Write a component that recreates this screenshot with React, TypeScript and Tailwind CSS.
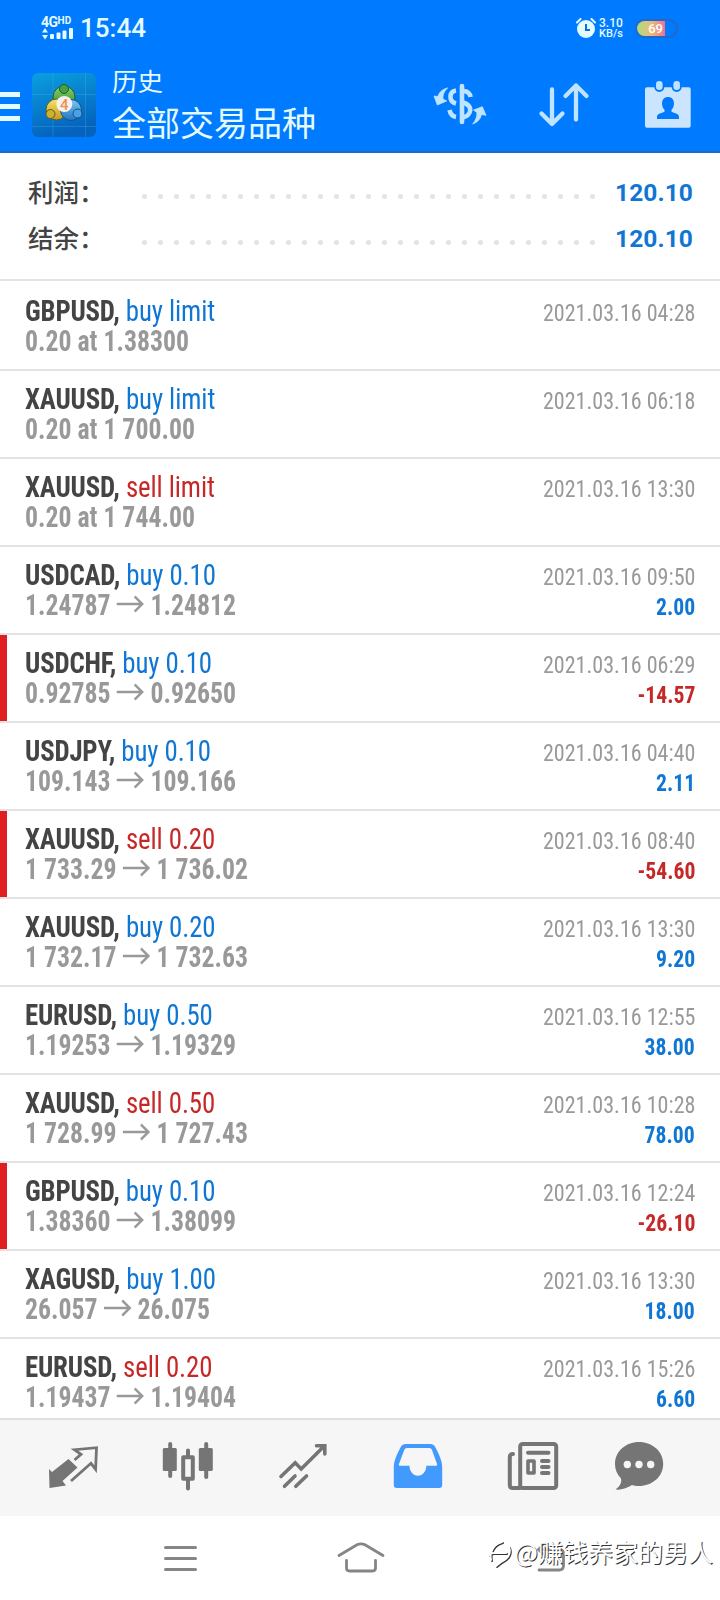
import type { ReactNode } from 'react';
import clsx from 'clsx';

type Deal = {
  symbol: string;
  side: 'buy' | 'sell';
  detail: string;
  from: string;
  to?: string;
  time: string;
  profit?: string;
};

const deals: Deal[] = [
  { symbol: 'GBPUSD', side: 'buy', detail: 'limit', from: '0.20 at 1.38300', time: '2021.03.16 04:28' },
  { symbol: 'XAUUSD', side: 'buy', detail: 'limit', from: '0.20 at 1 700.00', time: '2021.03.16 06:18' },
  { symbol: 'XAUUSD', side: 'sell', detail: 'limit', from: '0.20 at 1 744.00', time: '2021.03.16 13:30' },
  { symbol: 'USDCAD', side: 'buy', detail: '0.10', from: '1.24787', to: '1.24812', time: '2021.03.16 09:50', profit: '2.00' },
  { symbol: 'USDCHF', side: 'buy', detail: '0.10', from: '0.92785', to: '0.92650', time: '2021.03.16 06:29', profit: '-14.57' },
  { symbol: 'USDJPY', side: 'buy', detail: '0.10', from: '109.143', to: '109.166', time: '2021.03.16 04:40', profit: '2.11' },
  { symbol: 'XAUUSD', side: 'sell', detail: '0.20', from: '1 733.29', to: '1 736.02', time: '2021.03.16 08:40', profit: '-54.60' },
  { symbol: 'XAUUSD', side: 'buy', detail: '0.20', from: '1 732.17', to: '1 732.63', time: '2021.03.16 13:30', profit: '9.20' },
  { symbol: 'EURUSD', side: 'buy', detail: '0.50', from: '1.19253', to: '1.19329', time: '2021.03.16 12:55', profit: '38.00' },
  { symbol: 'XAUUSD', side: 'sell', detail: '0.50', from: '1 728.99', to: '1 727.43', time: '2021.03.16 10:28', profit: '78.00' },
  { symbol: 'GBPUSD', side: 'buy', detail: '0.10', from: '1.38360', to: '1.38099', time: '2021.03.16 12:24', profit: '-26.10' },
  { symbol: 'XAGUSD', side: 'buy', detail: '1.00', from: '26.057', to: '26.075', time: '2021.03.16 13:30', profit: '18.00' },
  { symbol: 'EURUSD', side: 'sell', detail: '0.20', from: '1.19437', to: '1.19404', time: '2021.03.16 15:26', profit: '6.60' },
];

function StatusBar() {
  return (
    <div className="flex h-14 items-center pl-[41px] pr-[42px] text-[#e3fbff]">
      <div className="flex w-8 flex-col">
        <div className="flex items-start font-['Roboto'] font-bold leading-[11px]">
          <span className="text-[14px] tracking-[-0.5px]">4G</span>
          <span className="text-[10px] leading-[8px]">HD</span>
        </div>
        <svg width="32" height="12" viewBox="0 0 32 12" fill="currentColor">
          <path d="M4 0l3 4.5H1zM4 11.5l3-4.5H1z" />
          <rect x="9" y="6" width="4" height="5" rx="1" />
          <rect x="15.500" y="4.500" width="4" height="6.500" rx="1" />
          <rect x="21.500" y="2.500" width="4" height="8.500" rx="1" />
          <rect x="28" y="0" width="4" height="11" rx="1" />
        </svg>
      </div>
      <span className="ml-[7px] font-['Roboto'] text-[26px] font-medium leading-none">15:44</span>
      <div className="ml-auto flex items-center">
        <svg width="20" height="20" viewBox="0 0 20 20" fill="none">
          <circle cx="10" cy="11" r="9" fill="#e3fbff" />
          <path d="M1 4.500L4.500 1M19 4.500L15.500 1" stroke="#e3fbff" strokeWidth="2" strokeLinecap="round" />
          <path d="M10 6v6h4" stroke="#0a6fe0" strokeWidth="2" />
        </svg>
        <div className="ml-[3px] w-[25px] font-['Roboto'] font-medium">
          <div className="text-[12px] leading-[11px]">3.10</div>
          <div className="text-[11px] leading-[10px]">KB/s</div>
        </div>
        <div className="ml-[11px] flex h-[19px] w-[43px] items-center rounded-full border-2 border-[#2268c8]">
          <div className="flex h-[15px] w-[28px] items-center justify-end rounded-l-full bg-gradient-to-r from-[#a8dc7c] via-[#e8bc7c] to-[#f0708c] pr-0.5 font-['Roboto'] text-[13px] font-medium leading-none text-white">
            69
          </div>
        </div>
      </div>
    </div>
  );
}

function AppIcon() {
  return (
    <svg width="64" height="64" viewBox="0 0 64 64">
      <defs>
        <linearGradient id="tile" x1="0" y1="0" x2="0.300" y2="1">
          <stop offset="0" stopColor="#0a9fe0" />
          <stop offset="1" stopColor="#0563bd" />
        </linearGradient>
        <linearGradient id="green" x1="0" y1="0" x2="0" y2="1">
          <stop offset="0" stopColor="#8ed06a" />
          <stop offset="1" stopColor="#2d8a2e" />
        </linearGradient>
        <linearGradient id="yellow" x1="0" y1="0" x2="0" y2="1">
          <stop offset="0" stopColor="#f3e36a" />
          <stop offset="1" stopColor="#c49a1c" />
        </linearGradient>
        <linearGradient id="blue" x1="0" y1="0" x2="0" y2="1">
          <stop offset="0" stopColor="#7cc8f4" />
          <stop offset="1" stopColor="#1f74c4" />
        </linearGradient>
      </defs>
      <rect width="64" height="64" rx="6" fill="url(#tile)" />
      <path d="M21 0v64M53.500 0v64M0 21.500h64M0 53.500h64" stroke="#5cc4f0" strokeOpacity=".25" />
      <circle cx="32" cy="24" r="11" fill="url(#green)" stroke="#1d5c33" />
      <circle cx="24.500" cy="36.500" r="10.500" fill="url(#yellow)" stroke="#5c5a2c" />
      <circle cx="39" cy="37" r="10.500" fill="url(#blue)" stroke="#174f8c" />
      <circle cx="32" cy="16" r="4.500" fill="#45a243" stroke="#1d5c33" />
      <circle cx="18.500" cy="41" r="4.500" fill="#cdb02c" stroke="#5c5a2c" />
      <circle cx="45.500" cy="40.500" r="4.500" fill="#4aa0e4" stroke="#174f8c" />
      <circle cx="32.300" cy="31" r="8" fill="#f6f1ee" />
      <text x="32.300" y="36.500" textAnchor="middle" fontFamily="Roboto, sans-serif" fontSize="15" fontWeight="500" fill="#ee9150">4</text>
    </svg>
  );
}

function Header() {
  return (
    <div className="flex h-[95px] items-start pr-7">
      <div className="mt-9 flex w-5 flex-col gap-[7px]">
        <div className="h-[5px] bg-[#e3fbff]" />
        <div className="h-[5px] bg-[#e3fbff]" />
        <div className="h-[5px] bg-[#e3fbff]" />
      </div>
      <div className="ml-3 mt-[17px]">
        <AppIcon />
      </div>
      <div className="ml-4 mt-2 font-['Noto_Sans_CJK_SC',sans-serif] text-[#e3fbff]">
        <div className="text-[25.500px] leading-[32px]">历史</div>
        <div className="text-[34px] leading-[51px]">全部交易品种</div>
      </div>
      <div className="ml-auto mt-6 flex items-start">
        <svg className="mt-0.5" width="56" height="44" viewBox="0 0 56 44" fill="none" stroke="#bfe4ff" strokeWidth="4.600">
          <path d="M30 4v36" strokeLinecap="round" />
          <path d="M24 8.500c-4 .5-5.500 3.500-5.500 6.500s2 5.500 5.500 6.500M32 9c4 .5 6 2.500 6.500 6M31 20.500c5 1.500 7.200 4 7.200 7.500s-3 6.500-7.200 7.500M17.500 28c1 4.500 3.500 6.500 6.500 7" />
          <path d="M15.700 6C11 7 7 10 6 14.500L2 14l3.300 9 9.400-4-3.700-2c-.5-4 1.500-8.500 4.700-11zM40.700 42c4.300-1.500 7.800-4.500 8.800-9.500l4.500.8-3.700-8.600-8.800 3.300 3.500 2.500c0 4.500-1.500 8.500-4.300 11.500z" fill="#bfe4ff" stroke="#bfe4ff" strokeWidth=".8" strokeLinejoin="round" />
        </svg>
        <svg className="ml-[50px]" width="52" height="48" viewBox="0 0 52 48" fill="none" stroke="#bfe4ff" strokeWidth="4.300" strokeLinecap="round" strokeLinejoin="round">
          <path d="M14 9.500v34M3.500 33.500L14 44l10.500-10.500M38 39.500V5.500M27.500 16L38 5.500 48.500 16" />
        </svg>
        <svg className="ml-[54px]" width="48" height="48" viewBox="0 0 48 48">
          <rect x="1" y="7.300" width="45.700" height="40.500" rx="2" fill="#cce5ff" />
          <rect x="10.300" y="-1" width="10" height="13" rx="5" fill="#007aff" />
          <rect x="27.700" y="-1" width="10" height="13" rx="5" fill="#007aff" />
          <rect x="12" y="1" width="6.600" height="9" rx="3.300" fill="#bfe4ff" />
          <rect x="29.400" y="1" width="6.600" height="9" rx="3.300" fill="#bfe4ff" />
          <path d="M24 17c3.800 0 6 2.700 6 6.500 0 2.800-1.200 5-2.500 6.300v2c3 1.500 7.500 1.700 7.500 5.200v2H13v-2c0-3.500 4.500-3.700 7.500-5.200v-2C19.200 28.500 18 26.300 18 23.500c0-3.800 2.200-6.500 6-6.500z" fill="#007aff" />
        </svg>
      </div>
    </div>
  );
}

function SummaryRow({ label, value }: { label: string; value: string }) {
  return (
    <div className="flex h-[46px] items-center pl-7 pr-[27px]">
      <span className="-mt-1 w-[114px] font-['Noto_Sans_CJK_SC',sans-serif] text-[25.500px] font-medium leading-none text-[#444]">
        {label}
      </span>
      <div className="mt-1.5 flex w-[453px] justify-between">
        {Array.from({ length: 29 }, (_, i) => (
          <span key={i} className="size-[5px] rounded-full bg-[#e3e3e3]" />
        ))}
      </div>
      <span className="ml-auto mt-px font-['Roboto'] text-[24.500px] font-bold leading-none tracking-[0.100px] text-[#0f76d4]">
        {value}
      </span>
    </div>
  );
}

function Arrow() {
  return (
    <svg className="relative -top-[3px] mx-[7px] inline-block" width="31" height="18" viewBox="0 0 31 18" fill="none" stroke="currentColor" strokeWidth="2.600">
      <path d="M0 9h29M20.500 1.500L29 9l-8.500 7.500" />
    </svg>
  );
}

function DealRow({ deal, first }: { deal: Deal; first: boolean }) {
  const loss = deal.profit?.startsWith('-');
  return (
    <div
      className={clsx(
        "flex shrink-0 border-b-2 border-[#e3e3e3] font-['Roboto_Condensed','Roboto',sans-serif]",
        first ? 'h-[90px]' : 'h-[88px]'
      )}
    >
      <div className={clsx('w-[7px] shrink-0', loss && 'bg-[#e01f22]')} />
      <div className={clsx('flex-1 pl-[18px] pr-[25px]', first ? 'pt-[15px]' : 'pt-[13px]')}>
        <div className="flex h-[30px] items-baseline justify-between leading-[30px]">
          <span className="origin-left scale-x-[0.925] whitespace-nowrap text-[29px]">
            <span className="font-bold tracking-[-0.200px] text-[#444]">{deal.symbol},</span>{' '}
            <span className={clsx('tracking-[-0.100px]', deal.side === 'buy' ? 'text-[#0f76d4]' : 'text-[#c62828]')}>
              {deal.side} {deal.detail}
            </span>
          </span>
          <span className="origin-right scale-x-[0.900] text-[24.500px] text-[#999]">{deal.time}</span>
        </div>
        <div className="flex h-[30px] items-baseline justify-between leading-[30px]">
          <span className="origin-left scale-x-[0.888] whitespace-nowrap text-[29px] font-bold text-[#999]">
            {deal.from}
            {deal.to && (
              <>
                <Arrow />
                {deal.to}
              </>
            )}
          </span>
          {deal.profit && (
            <span className={clsx('origin-right scale-x-[0.885] text-[24.500px] font-bold', loss ? 'text-[#c62828]' : 'text-[#0f76d4]')}>
              {deal.profit}
            </span>
          )}
        </div>
      </div>
    </div>
  );
}

function TabIcon({ className, children }: { className?: string; children: ReactNode }) {
  return (
    <svg className={clsx('shrink-0', className)} width="52" height="52" viewBox="0 0 52 52" fill="none">
      {children}
    </svg>
  );
}

function TabBar() {
  return (
    <div className="flex h-[98px] shrink-0 gap-[63px] border-t-2 border-[#e0e0e0] bg-[#f6f6f6] pl-[47px] pt-5 text-[#757575]">
      <TabIcon>
        <path d="M2 29l3 3 16.500-13 9 8.500-15 13.500 3.500 4.500L2.500 48z" fill="currentColor" />
        <path d="M27.500 20l6.500-5.700-6.500-4.600 22-2-.9 21.600-4.600-6L24 41" stroke="currentColor" strokeWidth="2.800" />
      </TabIcon>
      <TabIcon>
        <rect x=".8" y="8" width="14" height="23" rx="1.500" fill="currentColor" />
        <rect x="36.800" y="8" width="14" height="23" rx="1.500" fill="currentColor" />
        <path d="M8.200 4v32M44.200 4v33M26 10.500V17M26 39v9.500" stroke="currentColor" strokeWidth="4" strokeLinecap="round" />
        <rect x="21.200" y="17.300" width="9.600" height="21.400" stroke="currentColor" strokeWidth="4" strokeLinejoin="round" />
      </TabIcon>
      <TabIcon>
        <path
          d="M4 36.500l14.200-13.800 6 6.300L47.300 6M39.500 5.700h8.300v8.300M7.500 46.300L18 36M18.800 46.300L29.500 36"
          stroke="currentColor"
          strokeWidth="3.600"
          strokeLinecap="round"
        />
      </TabIcon>
      <TabIcon>
        <path
          fillRule="evenodd"
          clipRule="evenodd"
          d="M14 4h24c3 0 4.500 1.500 5.500 3.500C47 14 50.200 21 50.200 27v18a3 3 0 0 1-3 3H4.800a3 3 0 0 1-3-3V27C1.800 21 5 14 8.500 7.500 9.500 5.500 11 4 14 4zM15 8c-1.500 0-2.200.8-2.800 2L7 24c-.4 1.200 0 1.800 1 1.800h9.500c0 5.500 3.500 10 8.400 10s8.400-4.500 8.400-10H44c1 0 1.400-.6 1-1.800L40 10c-.6-1.200-1.300-2-2.800-2z"
          fill="#429aff"
        />
      </TabIcon>
      <TabIcon>
        <g stroke="currentColor" strokeWidth="4" strokeLinecap="round">
          <rect x="13.200" y="4" width="36" height="44" rx="2.500" />
          <path d="M6 14c-2 0-3.200 1-3.200 3v28c0 2 1 3 3 3h7" />
          <path d="M21 12.700h20.500M35 21h6.500M35 27h6.500M35 33h6.500" />
          <rect x="21" y="21" width="6" height="12" strokeWidth="3.600" strokeLinejoin="round" />
        </g>
      </TabIcon>
      <TabIcon className="-ml-[9px]">
        <path d="M26 2c13.300 0 24.200 9.500 24.200 22S39.300 46 26 46c-2.500 0-5-.3-7-1C14.500 48 8 50.300 2.500 49.500c4-3 6.500-6.500 5.500-11C4 34.500 2 29.500 2 24 2 11.500 12.700 2 26 2z" fill="currentColor" />
        <circle cx="14.300" cy="24.500" r="3.700" fill="#f6f6f6" />
        <circle cx="26" cy="24.500" r="3.700" fill="#f6f6f6" />
        <circle cx="37.700" cy="24.500" r="3.700" fill="#f6f6f6" />
      </TabIcon>
    </div>
  );
}

function SystemNav() {
  return (
    <div className="relative flex h-[84px] shrink-0 items-start bg-white pl-[164px] pt-6 text-[#858585]">
      <svg width="33" height="36" viewBox="0 0 33 36" stroke="currentColor" strokeWidth="3" strokeLinecap="round">
        <path d="M1.500 7.500h30M1.500 18.500h30M1.500 29.500h30" />
      </svg>
      <svg className="ml-[139.500px]" width="48" height="36" viewBox="0 0 48 36" fill="none" stroke="currentColor" strokeWidth="2.800" strokeLinecap="round">
        <path d="M2 15.500L20 4.800c3-1.500 5-1.500 8 0l18 10.700M9.500 20.500v7.500c0 2 1 3 3 3h23c2 0 3-1 3-3v-7.500" />
      </svg>
      <svg className="ml-[149px]" width="34" height="36" viewBox="0 0 34 36" fill="none" stroke="currentColor" strokeWidth="2.800" strokeLinecap="round">
        <path d="M5 30h20c3 0 4.500-1.500 4.500-4.500V14c0-3-1.500-4.500-4.500-4.500H6M9 5L4.500 9.500 9 14" />
      </svg>
      <div className="absolute right-[7px] top-[17px] flex items-center text-white">
        <svg className="mr-0.5 mt-1 drop-shadow-[1px_1px_0_#333]" width="24" height="30" viewBox="0 0 24 30" fill="none" stroke="currentColor" strokeWidth="2" strokeLinecap="round">
          <path d="M1 17c1-2 3-2 5-2h12M3 22C1 14 6 6 14 4M21 9c3 8-3 13-8 15l-5 4" />
        </svg>
        <span className="whitespace-nowrap font-['Noto_Sans_CJK_SC',sans-serif] text-[25px] leading-[36px] [text-shadow:1px_1px_0_#333]">
          @赚钱养家的男人
        </span>
      </div>
    </div>
  );
}

export default function App() {
  return (
    <div className="flex h-[1600px] w-[720px] flex-col overflow-hidden bg-white">
      <div className="shrink-0 border-b-2 border-[#1a6dc2] bg-[#007aff]">
        <StatusBar />
        <Header />
      </div>

      <div className="h-[128px] shrink-0 border-b-2 border-[#e3e3e3] pt-[17px]">
        <SummaryRow label="利润：" value="120.10" />
        <SummaryRow label="结余：" value="120.10" />
      </div>

      <div className="flex min-h-0 flex-1 flex-col overflow-hidden">
        {deals.map((deal, i) => (
          <DealRow key={i} deal={deal} first={i === 0} />
        ))}
      </div>

      <TabBar />
      <SystemNav />
    </div>
  );
}
